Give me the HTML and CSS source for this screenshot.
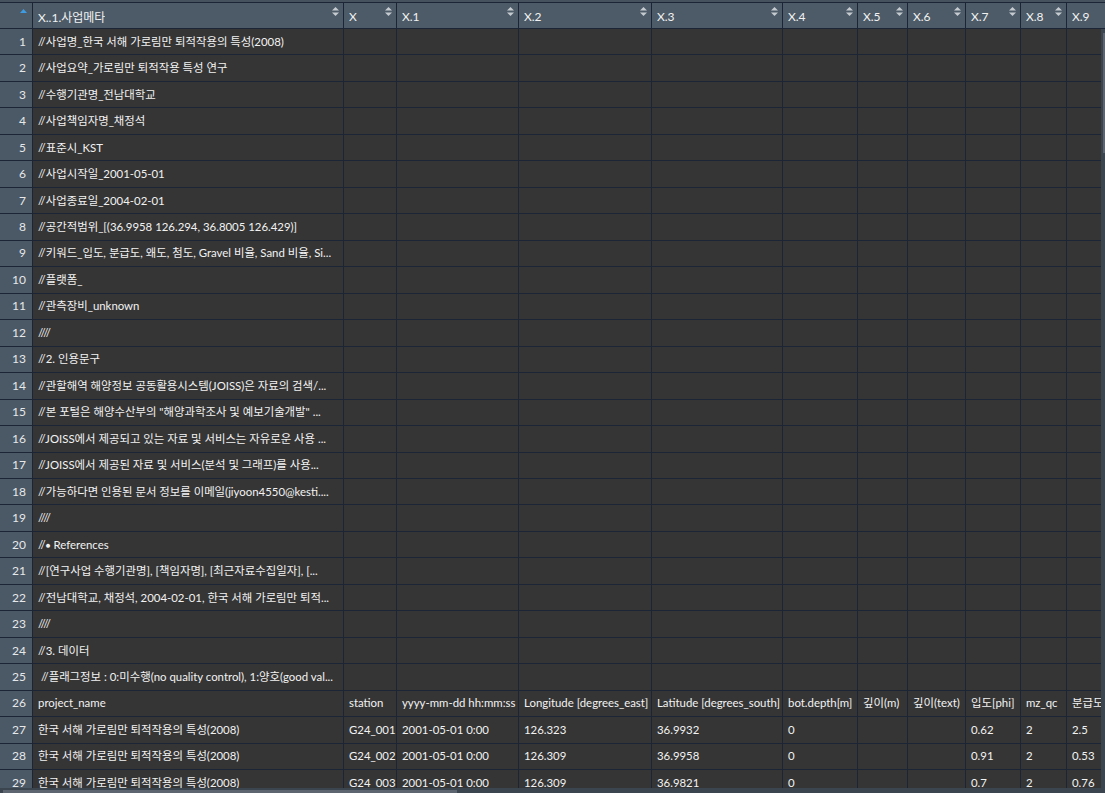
FILE: index.html
```html
<!DOCTYPE html>
<html lang="ko">
<head>
<meta charset="utf-8">
<title>Data Viewer</title>
<link rel="stylesheet" href="styles.css">
</head>
<body>
<div class="topbar"></div>
<div class="main">
  <div class="viewport">
    <table class="grid">
      <colgroup>
        <col class="c0"><col class="c1"><col class="c2"><col class="c3"><col class="c4"><col class="c5"><col class="c6"><col class="c7"><col class="c8"><col class="c9"><col class="c10"><col class="c11">
      </colgroup>
      <thead>
        <tr>
          <th class="rnh"><div class="th-in rn-in"><svg class="asc" width="7" height="4" viewBox="0 0 7 4"><polygon points="0,4 3.5,0 7,4"/></svg></div></th>
          <th><div class="th-in"><span>X..1.사업메타</span><svg class="sort" width="7" height="9" viewBox="0 0 7 9"><polygon points="0,3.5 3.5,0 7,3.5"/><polygon points="0,5.5 7,5.5 3.5,9"/></svg></div></th>
          <th><div class="th-in"><span>X</span><svg class="sort" width="7" height="9" viewBox="0 0 7 9"><polygon points="0,3.5 3.5,0 7,3.5"/><polygon points="0,5.5 7,5.5 3.5,9"/></svg></div></th>
          <th><div class="th-in"><span>X.1</span><svg class="sort" width="7" height="9" viewBox="0 0 7 9"><polygon points="0,3.5 3.5,0 7,3.5"/><polygon points="0,5.5 7,5.5 3.5,9"/></svg></div></th>
          <th><div class="th-in"><span>X.2</span><svg class="sort" width="7" height="9" viewBox="0 0 7 9"><polygon points="0,3.5 3.5,0 7,3.5"/><polygon points="0,5.5 7,5.5 3.5,9"/></svg></div></th>
          <th><div class="th-in"><span>X.3</span><svg class="sort" width="7" height="9" viewBox="0 0 7 9"><polygon points="0,3.5 3.5,0 7,3.5"/><polygon points="0,5.5 7,5.5 3.5,9"/></svg></div></th>
          <th><div class="th-in"><span>X.4</span><svg class="sort" width="7" height="9" viewBox="0 0 7 9"><polygon points="0,3.5 3.5,0 7,3.5"/><polygon points="0,5.5 7,5.5 3.5,9"/></svg></div></th>
          <th><div class="th-in"><span>X.5</span><svg class="sort" width="7" height="9" viewBox="0 0 7 9"><polygon points="0,3.5 3.5,0 7,3.5"/><polygon points="0,5.5 7,5.5 3.5,9"/></svg></div></th>
          <th><div class="th-in"><span>X.6</span><svg class="sort" width="7" height="9" viewBox="0 0 7 9"><polygon points="0,3.5 3.5,0 7,3.5"/><polygon points="0,5.5 7,5.5 3.5,9"/></svg></div></th>
          <th><div class="th-in"><span>X.7</span><svg class="sort" width="7" height="9" viewBox="0 0 7 9"><polygon points="0,3.5 3.5,0 7,3.5"/><polygon points="0,5.5 7,5.5 3.5,9"/></svg></div></th>
          <th><div class="th-in"><span>X.8</span><svg class="sort" width="7" height="9" viewBox="0 0 7 9"><polygon points="0,3.5 3.5,0 7,3.5"/><polygon points="0,5.5 7,5.5 3.5,9"/></svg></div></th>
          <th><div class="th-in"><span>X.9</span><svg class="sort" width="7" height="9" viewBox="0 0 7 9"><polygon points="0,3.5 3.5,0 7,3.5"/><polygon points="0,5.5 7,5.5 3.5,9"/></svg></div></th>
        </tr>
      </thead>
      <tbody>
        <tr><td class="rn">1</td><td>//사업명_한국 서해 가로림만 퇴적작용의 특성(2008)</td><td></td><td></td><td></td><td></td><td></td><td></td><td></td><td></td><td></td><td></td></tr>
        <tr><td class="rn">2</td><td>//사업요약_가로림만 퇴적작용 특성 연구</td><td></td><td></td><td></td><td></td><td></td><td></td><td></td><td></td><td></td><td></td></tr>
        <tr><td class="rn">3</td><td>//수행기관명_전남대학교</td><td></td><td></td><td></td><td></td><td></td><td></td><td></td><td></td><td></td><td></td></tr>
        <tr><td class="rn">4</td><td>//사업책임자명_채정석</td><td></td><td></td><td></td><td></td><td></td><td></td><td></td><td></td><td></td><td></td></tr>
        <tr><td class="rn">5</td><td>//표준시_KST</td><td></td><td></td><td></td><td></td><td></td><td></td><td></td><td></td><td></td><td></td></tr>
        <tr><td class="rn">6</td><td>//사업시작일_2001-05-01</td><td></td><td></td><td></td><td></td><td></td><td></td><td></td><td></td><td></td><td></td></tr>
        <tr><td class="rn">7</td><td>//사업종료일_2004-02-01</td><td></td><td></td><td></td><td></td><td></td><td></td><td></td><td></td><td></td><td></td></tr>
        <tr><td class="rn">8</td><td>//공간적범위_[(36.9958 126.294, 36.8005 126.429)]</td><td></td><td></td><td></td><td></td><td></td><td></td><td></td><td></td><td></td><td></td></tr>
        <tr><td class="rn">9</td><td>//키워드_입도, 분급도, 왜도, 첨도, Gravel 비율, Sand 비율, Si...</td><td></td><td></td><td></td><td></td><td></td><td></td><td></td><td></td><td></td><td></td></tr>
        <tr><td class="rn">10</td><td>//플랫폼_</td><td></td><td></td><td></td><td></td><td></td><td></td><td></td><td></td><td></td><td></td></tr>
        <tr><td class="rn">11</td><td>//관측장비_unknown</td><td></td><td></td><td></td><td></td><td></td><td></td><td></td><td></td><td></td><td></td></tr>
        <tr><td class="rn">12</td><td>////</td><td></td><td></td><td></td><td></td><td></td><td></td><td></td><td></td><td></td><td></td></tr>
        <tr><td class="rn">13</td><td>//2. 인용문구</td><td></td><td></td><td></td><td></td><td></td><td></td><td></td><td></td><td></td><td></td></tr>
        <tr><td class="rn">14</td><td>//관할해역 해양정보 공동활용시스템(JOISS)은 자료의 검색/...</td><td></td><td></td><td></td><td></td><td></td><td></td><td></td><td></td><td></td><td></td></tr>
        <tr><td class="rn">15</td><td>//본 포털은 해양수산부의 "해양과학조사 및 예보기술개발" ...</td><td></td><td></td><td></td><td></td><td></td><td></td><td></td><td></td><td></td><td></td></tr>
        <tr><td class="rn">16</td><td>//JOISS에서 제공되고 있는 자료 및 서비스는 자유로운 사용 ...</td><td></td><td></td><td></td><td></td><td></td><td></td><td></td><td></td><td></td><td></td></tr>
        <tr><td class="rn">17</td><td>//JOISS에서 제공된 자료 및 서비스(분석 및 그래프)를 사용...</td><td></td><td></td><td></td><td></td><td></td><td></td><td></td><td></td><td></td><td></td></tr>
        <tr><td class="rn">18</td><td>//가능하다면 인용된 문서 정보를 이메일(jiyoon4550@kesti....</td><td></td><td></td><td></td><td></td><td></td><td></td><td></td><td></td><td></td><td></td></tr>
        <tr><td class="rn">19</td><td>////</td><td></td><td></td><td></td><td></td><td></td><td></td><td></td><td></td><td></td><td></td></tr>
        <tr><td class="rn">20</td><td>//<span class="dot">●</span> References</td><td></td><td></td><td></td><td></td><td></td><td></td><td></td><td></td><td></td><td></td></tr>
        <tr><td class="rn">21</td><td>//[연구사업 수행기관명], [책임자명], [최근자료수집일자], [...</td><td></td><td></td><td></td><td></td><td></td><td></td><td></td><td></td><td></td><td></td></tr>
        <tr><td class="rn">22</td><td>//전남대학교, 채정석, 2004-02-01, 한국 서해 가로림만 퇴적...</td><td></td><td></td><td></td><td></td><td></td><td></td><td></td><td></td><td></td><td></td></tr>
        <tr><td class="rn">23</td><td>////</td><td></td><td></td><td></td><td></td><td></td><td></td><td></td><td></td><td></td><td></td></tr>
        <tr><td class="rn">24</td><td>//3. 데이터</td><td></td><td></td><td></td><td></td><td></td><td></td><td></td><td></td><td></td><td></td></tr>
        <tr><td class="rn">25</td><td>&nbsp;//플래그정보 : 0:미수행(no quality control), 1:양호(good val...</td><td></td><td></td><td></td><td></td><td></td><td></td><td></td><td></td><td></td><td></td></tr>
        <tr><td class="rn">26</td><td>project_name</td><td>station</td><td>yyyy-mm-dd hh:mm:ss</td><td>Longitude [degrees_east]</td><td>Latitude [degrees_south]</td><td>bot.depth[m]</td><td>깊이(m)</td><td>깊이(text)</td><td>입도[phi]</td><td>mz_qc</td><td>분급도</td></tr>
        <tr><td class="rn">27</td><td>한국 서해 가로림만 퇴적작용의 특성(2008)</td><td>G24_001</td><td>2001-05-01 0:00</td><td>126.323</td><td>36.9932</td><td>0</td><td></td><td></td><td>0.62</td><td>2</td><td>2.5</td></tr>
        <tr><td class="rn">28</td><td>한국 서해 가로림만 퇴적작용의 특성(2008)</td><td>G24_002</td><td>2001-05-01 0:00</td><td>126.309</td><td>36.9958</td><td>0</td><td></td><td></td><td>0.91</td><td>2</td><td>0.53</td></tr>
        <tr><td class="rn">29</td><td>한국 서해 가로림만 퇴적작용의 특성(2008)</td><td>G24_003</td><td>2001-05-01 0:00</td><td>126.309</td><td>36.9821</td><td>0</td><td></td><td></td><td>0.7</td><td>2</td><td>0.76</td></tr>
      </tbody>
    </table>
  </div>
  <div class="vscroll">
    <div class="vs-head"></div>
    <div class="vs-thumb"></div>
  </div>
</div>
<div class="hscroll"><div class="hs-thumb"></div></div>
</body>
</html>
```
FILE: styles.css
```css
* { box-sizing: border-box; }
html, body { margin: 0; padding: 0; }
body {
  width: 1105px;
  height: 793px;
  overflow: hidden;
  background: #3b4550;
  font-family: Lato, "Noto Sans CJK KR", sans-serif;
  font-size: 11.4px;
  color: #f2f2f2;
}
.topbar {
  height: 3px;
  background: #46525e;
  border-bottom: 1px solid #1b2535;
}
.main {
  display: flex;
  height: 785px;
}
.viewport {
  width: 1101px;
  height: 785px;
  overflow: hidden;
  flex: none;
}
.grid {
  border-collapse: separate;
  border-spacing: 0;
  table-layout: fixed;
  width: 1147px;
}
.c0 { width: 33px; }
.c1 { width: 311px; }
.c2 { width: 53px; }
.c3 { width: 122px; }
.c4 { width: 133px; }
.c5 { width: 131px; }
.c6 { width: 75px; }
.c7 { width: 50px; }
.c8 { width: 58px; }
.c9 { width: 55px; }
.c10 { width: 46px; }
.c11 { width: 80px; }

th, td {
  border-right: 1px solid #1b2535;
  border-bottom: 1px solid #1b2535;
  padding: 0 1px 0 5px;
  white-space: nowrap;
  overflow: hidden;
  text-overflow: clip;
  text-align: left;
  font-weight: normal;
}
th {
  height: 26px;
  background: #4d5b68;
  padding: 0 4px 0 5px;
  vertical-align: top;
}
.th-in {
  height: 25px;
  display: flex;
  justify-content: space-between;
  align-items: center;
}
.th-in span {
  padding-top: 2px;
  overflow: hidden;
  font-size: 12px;
}
.sort {
  flex: none;
  align-self: flex-start;
  margin-top: 4px;
  fill: #c6cbd0;
}
.rnh { padding: 0; }
.rn-in {
  justify-content: flex-end;
  padding-right: 5px;
}
.asc {
  align-self: flex-start;
  margin-top: 6px;
  fill: #3e9de2;
}
td {
  height: 26.475px;
  background: #353535;
  vertical-align: middle;
  line-height: 16px;
}
td.rn {
  background: #4b5865;
  text-align: right;
  padding: 0 6px 0 0;
  color: #e6e8ea;
  font-size: 12px;
}
.dot {
  font-size: 8px;
  vertical-align: 1px;
}
.vscroll {
  width: 4px;
  flex: none;
}
.vs-head {
  height: 26px;
  background: #4d5b68;
  border-bottom: 1px solid #1b2535;
}
.vs-thumb {
  margin: 4px 0 0 2px;
  width: 2px;
  height: 120px;
  background: #5d6670;
}
.hscroll {
  height: 5px;
  padding: 2px 0 0 3px;
}
.hs-thumb {
  width: 454px;
  height: 3px;
  background: #5d6670;
}
```
